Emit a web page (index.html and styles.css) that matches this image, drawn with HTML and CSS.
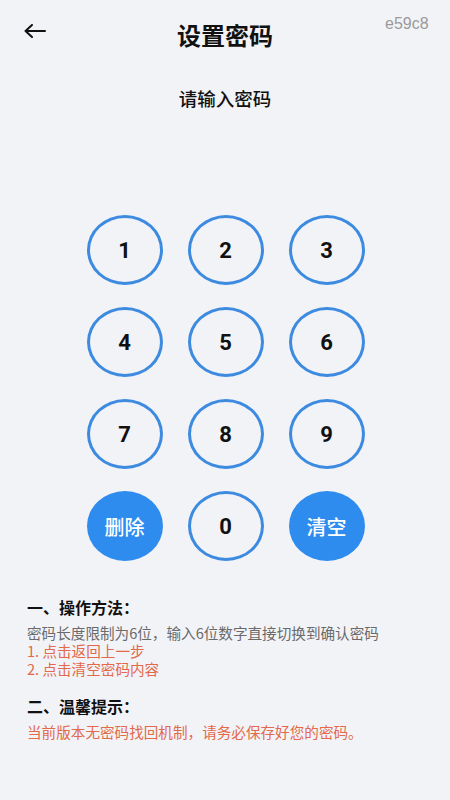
FILE: index.html
```html
<!DOCTYPE html>
<html lang="zh-CN">
<head>
<meta charset="utf-8">
<title>设置密码</title>
<link rel="stylesheet" href="styles.css">
</head>
<body>
<div class="page">
  <header class="header">
    <div class="back">
      <svg width="22" height="14" viewBox="0 0 22 14" aria-hidden="true">
        <path d="M1.5 7H21M8 1L1.5 7L8 13" fill="none" stroke="#111" stroke-width="2" stroke-linecap="round" stroke-linejoin="round"/>
      </svg>
    </div>
    <h1 class="title">设置密码</h1>
    <div class="tag">e59c8</div>
  </header>

  <p class="prompt">请输入密码</p>

  <div class="keypad">
    <button class="key">1</button>
    <button class="key">2</button>
    <button class="key">3</button>
    <button class="key">4</button>
    <button class="key">5</button>
    <button class="key">6</button>
    <button class="key">7</button>
    <button class="key">8</button>
    <button class="key">9</button>
    <button class="key key-action">删除</button>
    <button class="key">0</button>
    <button class="key key-action">清空</button>
  </div>

  <section class="notes">
    <h2 class="notes-title">一、操作方法：</h2>
    <p class="line muted">密码长度限制为6位，输入6位数字直接切换到确认密码</p>
    <p class="line warn">1. 点击返回上一步</p>
    <p class="line warn">2. 点击清空密码内容</p>
    <h2 class="notes-title second">二、温馨提示：</h2>
    <p class="line warn">当前版本无密码找回机制，请务必保存好您的密码。</p>
  </section>
</div>
</body>
</html>
```

FILE: styles.css
```css
html, body {
  margin: 0;
  padding: 0;
  background: #f2f3f7;
}
body {
  font-family: "Noto Sans CJK SC", "Noto Sans", sans-serif;
  color: #111;
}
.page {
  width: 450px;
  min-height: 800px;
  box-sizing: border-box;
}
.header {
  display: grid;
  grid-template-columns: 90px 1fr 90px;
  height: 70px;
  align-items: center;
}
.back {
  padding-left: 24px;
  display: flex;
  align-items: center;
  margin-top: -8px;
}
.title {
  margin: 0;
  text-align: center;
  font-size: 24px;
  font-weight: 700;
  line-height: 30px;
}
.tag {
  align-self: start;
  padding-top: 13px;
  padding-left: 25px;
  font-family: "Liberation Sans", Arial, sans-serif;
  font-size: 16px;
  color: #9a9a9a;
  line-height: 22px;
}
.prompt {
  margin: 16px 0 0;
  text-align: center;
  font-size: 18.5px;
  font-weight: 500;
  line-height: 24px;
}
.keypad {
  margin-top: 105px;
  display: grid;
  grid-template-columns: repeat(3, 76px);
  grid-auto-rows: 70px;
  column-gap: 25px;
  row-gap: 22px;
  justify-content: center;
  padding-left: 1px;
}
.key {
  width: 76px;
  height: 70px;
  border-radius: 50%;
  border: 3px solid #3d8be0;
  background: transparent;
  box-sizing: border-box;
  padding: 0;
  font-family: Roboto, "Noto Sans CJK SC", sans-serif;
  font-size: 22px;
  font-weight: 700;
  color: #111;
  display: flex;
  align-items: center;
  justify-content: center;
}
.key-action {
  background: #2f8cef;
  border-color: #2f8cef;
  color: #fff;
  font-family: "Noto Sans CJK SC", sans-serif;
  font-size: 20px;
  font-weight: 500;
}
.notes {
  margin-top: 35px;
  padding: 0 27px;
}
.notes-title {
  margin: 0;
  font-size: 16px;
  font-weight: 700;
  line-height: 22px;
  color: #111;
}
.notes-title.second {
  margin-top: 17px;
}
.line {
  margin: 0;
  font-size: 14.6px;
  line-height: 18px;
}
.notes-title + .line {
  margin-top: 6px;
}
.muted {
  color: #6a6a6a;
}
.warn {
  color: #e2694a;
}
```
